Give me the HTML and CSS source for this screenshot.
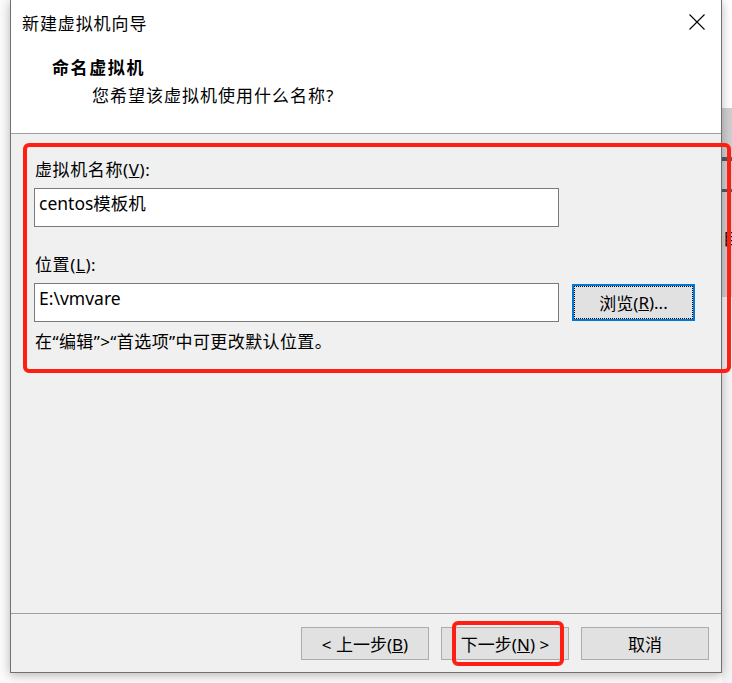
FILE: index.html
```html
<!DOCTYPE html>
<html>
  <head>
    <title>新建虚拟机向导</title>
    <link rel="stylesheet" href="styles.css">
  </head>
  <body>
    <div class="scherm">
      <div class="venster">
        <div class="kop">
          <div class="titelbalk">
            <span class="titel">新建虚拟机向导</span>
            <svg class="sluiten" width="16" height="16" viewBox="0 0 16 16">
              <path d="M0.5 0.5 L15.5 15.5 M15.5 0.5 L0.5 15.5" stroke="#000" stroke-width="1.1" fill="none" />
            </svg>
          </div>
          <div class="kopregel">命名虚拟机</div>
          <div class="subregel">您希望该虚拟机使用什么名称?</div>
        </div>

        <div class="inhoud">
          <div class="label">虚拟机名称(<u>V</u>):</div>
          <div class="tekstvak">centos模板机</div>
          <div class="label label-twee">位置(<u>L</u>):</div>
          <div class="rij">
            <div class="tekstvak">E:\vmvare</div>
            <button class="knop knop-focus"><span class="focusrand">浏览(<u>R</u>)...</span></button>
          </div>
          <div class="hint">在“编辑”>“首选项”中可更改默认位置。</div>
        </div>

        <div class="voet">
          <button class="knop knop-voet">&lt; 上一步(<u>B</u>)</button>
          <button class="knop knop-voet">下一步(<u>N</u>) &gt;</button>
          <button class="knop knop-voet">取消</button>
        </div>
      </div>

      <div class="achter">
        <div class="achter-wit"></div>
        <div class="achter-grijs">
          <div class="balk"></div>
          <div class="balk balk-twee"></div>
          <div class="achter-tekst">目</div>
        </div>
        <div class="achter-rest"></div>
      </div>

      <div class="markering markering-velden"></div>
      <div class="markering markering-volgende"></div>
    </div>
  </body>
</html>
```

FILE: styles.css
```css
* {
  box-sizing: border-box;
}
body {
  margin: 0;
  background-color: #ffffff;
  font-family: "Noto Sans", "Noto Sans CJK SC", sans-serif;
  color: #000;
}
.scherm {
  position: relative;
  display: flex;
  width: 732px;
  height: 683px;
  overflow: hidden;
  background-color: #fbfbfb;
}
.venster {
  display: flex;
  flex-direction: column;
  flex-shrink: 0;
  width: 712px;
  height: 673px;
  margin-left: 10px;
  border: 1px solid #707070;
  border-top: none;
  background-color: #f0f0f0;
  box-shadow: 0 2px 10px rgba(0, 0, 0, 0.28);
  position: relative;
  z-index: 1;
}
.kop {
  height: 134px;
  background-color: #fff;
  border-bottom: 1px solid #a0a0a0;
}
.titelbalk {
  display: flex;
  align-items: center;
  justify-content: space-between;
  height: 44px;
  padding-left: 11px;
  padding-right: 16px;
}
.titel {
  font-size: 17px;
  letter-spacing: 0.9px;
}
.sluiten {
  display: block;
}
.kopregel {
  margin-top: 12px;
  padding-left: 41px;
  font-size: 17px;
  line-height: 24px;
  font-weight: bold;
  letter-spacing: 1.6px;
}
.subregel {
  margin-top: 4px;
  padding-left: 81px;
  font-size: 17px;
  line-height: 24px;
  letter-spacing: 1px;
}
.inhoud {
  flex: 1;
  padding: 24px 0 0 23px;
}
.label {
  padding-left: 1px;
  font-size: 17px;
  line-height: 24px;
  letter-spacing: 0.6px;
}
.label-twee {
  margin-top: 26px;
}
.tekstvak {
  width: 525px;
  height: 39px;
  margin-top: 6px;
  padding: 2px 0 0 4px;
  background-color: #fff;
  border: 1px solid #7a7a7a;
  font-size: 17.5px;
  line-height: 24px;
}
.rij {
  display: flex;
  align-items: flex-start;
  gap: 13px;
  margin-top: 0;
}
.knop {
  font-family: "Noto Sans", "Noto Sans CJK SC", sans-serif;
  font-size: 17px;
  color: #000;
  background-color: #e1e1e1;
  border: 1px solid #adadad;
  padding: 0;
}
.knop-focus {
  width: 123px;
  height: 37px;
  margin-top: 7px;
  border: 2px solid #0078d7;
}
.focusrand {
  display: flex;
  align-items: center;
  justify-content: center;
  height: 100%;
  border: 1px dotted #000;
}
.hint {
  margin-top: 8px;
  padding-left: 1px;
  font-size: 17px;
  line-height: 24px;
  letter-spacing: 0.4px;
}
.voet {
  display: flex;
  justify-content: flex-end;
  gap: 12px;
  height: 59px;
  padding: 13px 12px 0 0;
  border-top: 1px solid #a0a0a0;
}
.knop-voet {
  width: 128px;
  height: 33px;
}
.achter {
  flex: 1;
  min-width: 0;
  display: flex;
  flex-direction: column;
}
.achter-wit {
  height: 108px;
  background-color: #ffffff;
}
.achter-grijs {
  height: 189px;
  padding-top: 49px;
  background-color: #cfcfcf;
  overflow: hidden;
}
.balk {
  height: 4px;
  background-color: #4d5b68;
}
.balk-twee {
  height: 3px;
  margin-top: 28px;
}
.achter-tekst {
  margin-top: 38px;
  margin-left: 1px;
  font-size: 16px;
  line-height: 18px;
}
.achter-rest {
  flex: 1;
  background-color: #f4f4f4;
}
.markering {
  position: absolute;
  z-index: 2;
  border: 4px solid #ff1e12;
  border-radius: 6px;
}
.markering-velden {
  left: 23px;
  top: 143px;
  width: 708px;
  height: 230px;
}
.markering-volgende {
  left: 452px;
  top: 621px;
  width: 112px;
  height: 45px;
}
```
